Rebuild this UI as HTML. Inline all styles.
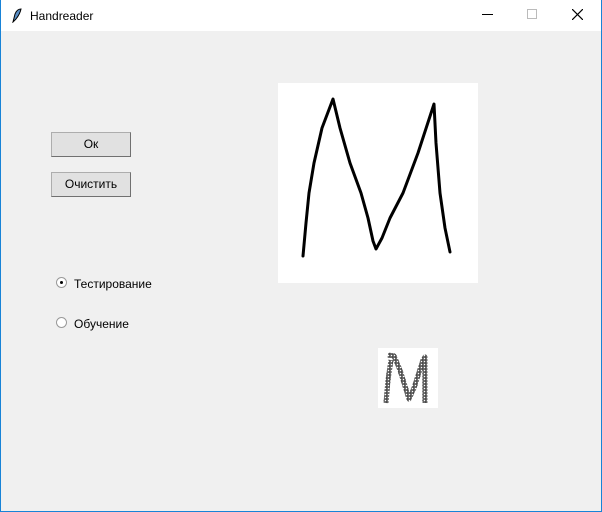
<!DOCTYPE html>
<html><head><meta charset="utf-8"><style>
*{margin:0;padding:0;box-sizing:border-box}
body{width:602px;height:512px;overflow:hidden;font-family:"Liberation Sans","DejaVu Sans",sans-serif;font-size:12px;color:#000;position:relative;background:#f0f0f0}
.title{position:absolute;left:0;top:0;width:602px;height:31px;background:#fff}
.title span{position:absolute;left:30px;top:9px;font-size:12px}
.btn{position:absolute;left:51px;width:80px;height:25px;background:#e1e1e1;border:1px solid #adadad;border-right-color:#707070;border-bottom-color:#707070;text-align:center;line-height:23px;font-size:12px}
.lbl{position:absolute;left:74px;font-size:12px}
.radio{position:absolute;left:56px;width:11px;height:11px;border-radius:50%;border:1px solid #999;background:#fff}
.bd{position:absolute;background:#1883d7}
</style></head><body>
<div class="title">
<svg style="position:absolute;left:12px;top:8px" width="10" height="15" viewBox="0 0 10 15"><path d="M1 14 L3 6 Q5 1 9 1 Q8 6 4 11 Z" fill="#5a8ec6" stroke="#000" stroke-width="1"/></svg>
<span>Handreader</span>
<div style="position:absolute;left:482px;top:14px;width:11px;height:1px;background:#000"></div>
<div style="position:absolute;left:527px;top:9px;width:10px;height:10px;border:1px solid #bbb"></div>
<svg style="position:absolute;left:572px;top:9px" width="11" height="11"><path d="M0 0L11 11M11 0L0 11" stroke="#000" stroke-width="1.2"/></svg>
</div>
<div class="bd" style="left:0;top:0;width:1px;height:512px"></div>
<div class="bd" style="right:0;top:0;width:1px;height:512px"></div>
<div class="bd" style="left:0;bottom:0;width:602px;height:1px"></div>
<div class="btn" style="top:132px">Ок</div>
<div class="btn" style="top:172px">Очистить</div>
<div class="radio" style="top:277px"><div style="position:absolute;left:3px;top:3px;width:3px;height:3px;border-radius:50%;background:#000"></div></div>
<div class="lbl" style="top:277px">Тестирование</div>
<div class="radio" style="top:317px"></div>
<div class="lbl" style="top:317px">Обучение</div>
<svg style="position:absolute;left:278px;top:83px" width="200" height="200"><rect width="200" height="200" fill="#fff"/>
<path d="M25 173 L28 140 L31 110 L36 80 L44 45 L55 16 L62 45 L72 80 L83 110 L90 135 L95 158 L98 166 L104 155 L112 135 L125 110 L140 70 L156 21 L158 60 L162 110 L167 145 L172 169" fill="none" stroke="#000" stroke-width="3" stroke-linejoin="round" stroke-linecap="round"/></svg>
<svg style="position:absolute;left:378px;top:348px" width="60" height="60">
<defs>
<pattern id="p" width="3" height="3" patternUnits="userSpaceOnUse"><rect width="3" height="3" fill="#fff"/><circle cx="1.5" cy="1.5" r="1.3" fill="#fff" stroke="#000" stroke-width="0.6"/></pattern>
<mask id="m"><rect width="60" height="60" fill="#000"/><path d="M8 55 L10 32 L13 12 M10 7 L16 8 L22 22 L31 51 L36 40 L45 12 L47 9 L47 55" fill="none" stroke="#fff" stroke-width="5" stroke-linejoin="round"/></mask>
</defs>
<rect width="60" height="60" fill="#fff"/>
<rect width="60" height="60" fill="url(#p)" mask="url(#m)"/>
</svg>
</body></html>
